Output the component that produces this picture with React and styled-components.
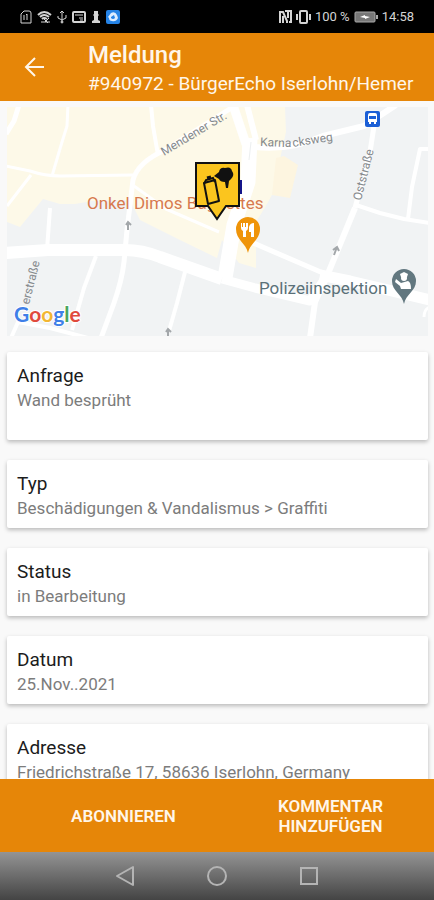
import React from "react";
import styled, { createGlobalStyle } from "styled-components";

const GlobalStyle = createGlobalStyle`
  * {
    box-sizing: border-box;
  }

  body {
    margin: 0;
    font-family: Roboto, "Liberation Sans", sans-serif;
    background: #f9f9f9;
  }
`;

const Screen = styled.div`
  display: flex;
  flex-direction: column;
  height: 100vh;
`;

const StatusBar = styled.div`
  display: flex;
  justify-content: space-between;
  align-items: center;
  flex: none;
  height: 33px;
  padding: 0 20px;
  background: #000;
  color: #d4d4d4;
  font-size: 13px;
`;

const StatusGroup = styled.div`
  display: flex;
  align-items: center;
  gap: ${(props) => props.$gap}px;

  svg {
    display: block;
  }
`;

const AppBar = styled.header`
  display: flex;
  align-items: center;
  flex: none;
  height: 68px;
  padding: 4px 16px 0 20px;
  gap: 38px;
  background: #e68608;
  color: #fff6ea;
`;

const BackButton = styled.button`
  display: flex;
  padding: 0 0 4px;
  border: none;
  background: none;
  color: inherit;
  cursor: pointer;
`;

const Heading = styled.div`
  white-space: nowrap;
`;

const Title = styled.h1`
  margin: 0;
  font-size: 24px;
  line-height: 30px;
  font-weight: 500;
`;

const Subtitle = styled.p`
  margin: 0;
  font-size: 19px;
  line-height: 28px;
`;

const Content = styled.main`
  display: flex;
  flex-direction: column;
  flex: 1;
  min-height: 0;
  padding: 6px 6px 0 7px;
  overflow-y: auto;
  scrollbar-width: none;
`;

const MapView = styled.svg`
  display: block;
  flex: none;
  width: 100%;
  height: 229px;
  background: #f1f3f4;
  font-family: Roboto, "Liberation Sans", sans-serif;
`;

const Cards = styled.div`
  display: flex;
  flex-direction: column;
  gap: 20px;
  padding: 16px 0;
`;

const Card = styled.section`
  flex: none;
  min-height: ${(props) => (props.$tall ? 88 : 68)}px;
  padding: 11px 10px 8px;
  background: #fff;
  border-radius: 2px;
  box-shadow: 0 2px 4px rgba(0, 0, 0, 0.26);
`;

const CardTitle = styled.h2`
  margin: 0;
  color: #1c1c1c;
  font-size: 19px;
  line-height: 25px;
  font-weight: 400;
`;

const CardText = styled.p`
  margin: 0;
  color: #7c7c7c;
  font-size: 17px;
  line-height: 24px;
`;

const ActionBar = styled.footer`
  display: grid;
  grid-template-columns: 1fr 1fr;
  flex: none;
  height: 73px;
  padding-left: 20px;
  background: #e68608;
`;

const ActionButton = styled.button`
  padding: 0 48px;
  border: none;
  background: none;
  color: #fff6ea;
  font-family: inherit;
  font-size: 17px;
  line-height: 20px;
  font-weight: 600;
  text-transform: uppercase;
  cursor: pointer;
`;

const NavBar = styled.nav`
  display: flex;
  justify-content: center;
  align-items: center;
  flex: none;
  gap: 68px;
  height: 48px;
  background: linear-gradient(#949494, #444);
`;

const NavButton = styled.button`
  display: flex;
  padding: 0;
  border: none;
  background: none;
  color: #b4b4b4;
  cursor: pointer;
`;

const details = [
  { title: "Anfrage", text: "Wand besprüht", tall: true },
  { title: "Typ", text: "Beschädigungen & Vandalismus > Graffiti" },
  { title: "Status", text: "in Bearbeitung" },
  { title: "Datum", text: "25.Nov..2021" },
  { title: "Adresse", text: "Friedrichstraße 17, 58636 Iserlohn, Germany" },
];

const roads = [
  { w: 5, d: "M19 105 L14 121 L6 134" },
  { w: 3, d: "M68 105 L67 126 L62 142 L52 176" },
  { w: 3, d: "M6 166 L30 171 Q45 176 60 176 L133 175" },
  { w: 3, d: "M31 175 L7 206" },
  { w: 4, d: "M151 105 L153 126 L158 155" },
  { w: 5, d: "M236 105 L165 150 Q138 162 133 180 L127 230 L124 262 Q122 280 114 303 L101 338" },
  { w: 3, d: "M134 186 L166 209 L219 232" },
  { w: 4, d: "M50 208 L47 250" },
  { w: 12, d: "M5 253 L48 250 L125 250 Q142 250 160 257 L222 279" },
  { w: 9, d: "M222 279 L255 288 L310 301 L324 280" },
  { w: 11, d: "M320 275 L350 281 L430 300" },
  { w: 9, d: "M233 105 L246 144" },
  { w: 6, d: "M247 105 L256 140" },
  { w: 15, d: "M250 138 L248 182 L234 225 L225 278" },
  { w: 5, d: "M230 233 L330 276" },
  { w: 6, d: "M254 147 Q290 151 323 136 L364 126 L396 105" },
  { w: 5, d: "M374 126 L370 152 L355 208" },
  { w: 6, d: "M355 208 L327 276 L315 302 L310 338" },
  { w: 4, d: "M356 205 L380 213 L404 219 L430 223" },
  { w: 4, d: "M408 219 L412 187 L420 149 L430 149" },
  { w: 4, d: "M96 256 L84 288 L72 330" },
  { w: 4, d: "M185 272 L177 303 L169 331" },
  { w: 4, d: "M11 338 L18 322 L50 328 L88 338" },
  { w: 3, d: "M424 317 Q424 309 430 307" },
];

const Map = () => {
  return (
    <MapView
      viewBox="7 107 421 229"
      preserveAspectRatio="xMidYMid slice"
      role="img"
      aria-label="Karte"
    >
      <path
        d="M7 107 H285 L286 132 L272 195 L256 225 L256 268 L239 263 L222 240 L217 258 L180 240 L140 220 L130 200 L92 201 L75 204 L60 204 L43 199 L20 227 L7 222 Z"
        fill="#fdf9e8"
      />
      <path d="M284 156 L298 165 L290 198 L272 195 L276 158 Z" fill="#fdf5e0" />
      <path d="M256 222 L272 196 L290 199 L280 251 L257 242 Z" fill="#f1f3f4" />

      <g fill="none" stroke="#fff" strokeLinejoin="round">
        {roads.map((road) => (
          <path key={road.d} d={road.d} strokeWidth={road.w} />
        ))}
      </g>
      <path d="M251 142 L249 160" stroke="#eceff0" fill="none" />

      <g fill="none" stroke="#a3a7aa" strokeWidth="2">
        <path d="M128 230 V222 M126 225 L128 222 L131 225" />
        <path d="M334 255 L337 247 M333 250 L337 247 L339 251" />
        <path d="M168 336 V329 M166 332 L168 329 L171 332" />
      </g>

      <g fill="#85898c" fontSize="12">
        <text transform="translate(164 156) rotate(-31)">Mendener Str.</text>
        <text transform="translate(260 146) rotate(2)">Karna</text>
        <text transform="translate(293 147) rotate(-9)">cksweg</text>
        <text transform="translate(361 201) rotate(-76)">Oststraße</text>
        <text transform="translate(29 305) rotate(-76)">erstraße</text>
      </g>

      <text x="87" y="209" fontSize="17" fill="#d7794e">
        Onkel Dimos Baguettes
      </text>
      <text x="259" y="294" fontSize="17" fill="#5a7078">
        Polizeiinspektion
      </text>

      {/* bus stop */}
      <rect x="365" y="111" width="15" height="16" rx="2" fill="#1b5fd6" />
      <path d="M368 115 Q368 113 370 113 H375 Q377 113 377 115 V122 H376 V124 H374 V122 H371 V124 H369 V122 H368 Z" fill="#fff" />
      <path d="M369 116 H376 V119 H369 Z" fill="#1b5fd6" />

      {/* restaurant */}
      <path d="M248 253 C246 243 236 240 236 229 A12 12 0 0 1 260 229 C260 240 250 243 248 253 Z" fill="#ef9409" />
      <path d="M241 223 H242 V227 H243 V223 H245 V227 H246 V223 H248 V228 Q248 230 246 231 V237 H243 V231 Q241 230 241 228 Z" fill="#fff" />
      <path d="M254 223 V237 H251 V232 H249 V227 Q250 223 254 223 Z" fill="#fff" />

      {/* police */}
      <path d="M404 304 C402 294 392 291 392 281 A12 12 0 0 1 416 281 C416 291 406 294 404 304 Z" fill="#62777f" />
      <g fill="#fff">
        <path d="M400 274 L404 272 L408 274 L407 277 H401 Z" />
        <circle cx="404" cy="278" r="3" />
        <path d="M396 279 L401 283 L408 281 Q411 282 411 289 H401 L400 286 L395 282 Z" />
      </g>

      {/* report marker */}
      <path d="M239 180 H242 V194 H239 Z" fill="#15158a" />
      <path
        d="M196 163 H239 V206 H226 L217 219 L208 206 H196 Z"
        fill="#fbc51e"
        stroke="#111"
        strokeWidth="2"
      />
      <path d="M204 183 L215 180 L219 201 L208 204 Z" fill="none" stroke="#111" strokeWidth="2" strokeLinejoin="round" />
      <path d="M204 184 L206 180 L213 178 L215 182" fill="none" stroke="#111" strokeWidth="2" />
      <path d="M207 178 L211 177" stroke="#111" strokeWidth="3" />
      <path d="M214 176 L219 172 Q220 167 225 168 Q231 166 232 171 Q235 175 231 179 L229 181 L228 188 L226 188 L225 182 Q220 182 219 179 Z" fill="#111" />

      <text x="14" y="322" fontSize="21" fontWeight="700" fontFamily="Lato, sans-serif" stroke="#fff" strokeWidth="2" paintOrder="stroke">
        <tspan fill="#3f7fe8">G</tspan>
        <tspan fill="#e04a3c">o</tspan>
        <tspan fill="#f2b632">o</tspan>
        <tspan fill="#3f7fe8">g</tspan>
        <tspan fill="#4aa65c">l</tspan>
        <tspan fill="#e04a3c">e</tspan>
      </text>
    </MapView>
  );
};

const StatusIcons = () => {
  return (
    <StatusGroup $gap={5}>
      <svg width="12" height="14" fill="none" stroke="#d4d4d4">
        <path d="M1 4 L4 1 H9 Q11 1 11 3 V13 H1 Z M4 5 V10 M7 4 V10 M6 5 L7 4" />
      </svg>
      <svg width="15" height="14" fill="none" stroke="#d4d4d4">
        <path d="M1 5 Q7 -1 14 5 M3 7 Q7 3 12 7 M5 9 Q7 7 10 9" strokeWidth="2" />
        <path d="M7 9 L11 13 M12 8 L8 12 M4 12 H13" />
      </svg>
      <svg width="10" height="14" fill="none" stroke="#d4d4d4">
        <path d="M5 1 V13 M3 3 L5 1 L7 3 M1 6 V8 L5 10 L9 8 V5" />
        <circle cx="5" cy="12" r="1" />
      </svg>
      <svg width="14" height="14" fill="none" stroke="#d4d4d4">
        <rect x="1" y="2" width="12" height="10" rx="1" strokeWidth="2" />
        <path d="M3 5 H11 M7 8 H11 M8 10 H11" />
      </svg>
      <svg width="10" height="14" fill="#d4d4d4">
        <path d="M3 1 H7 V4 L8 5 L7 6 V10 L9 11 V13 H1 V11 L3 10 V6 L2 5 L3 4 Z" />
      </svg>
      <svg width="14" height="14">
        <rect width="14" height="14" rx="2" fill="#2583e6" />
        <path d="M2 7 L5 3 Q9 1 11 5 L12 8 Q10 12 6 11 Q3 11 3 8 Z" fill="#dcecff" />
        <path d="M5 7 L8 5 L9 8 Q7 10 5 8 Z" fill="#2583e6" />
      </svg>
    </StatusGroup>
  );
};

const SystemIcons = () => {
  return (
    <StatusGroup $gap={4}>
      <svg width="13" height="14" fill="none" stroke="#d4d4d4" strokeWidth="2">
        <path d="M1 13 V2 H4 L8 11 V13 M4 6 V13 M6 1 H12 V12 H10 M9 1 V8" />
      </svg>
      <svg width="15" height="14" fill="none" stroke="#d4d4d4">
        <rect x="4" y="1" width="7" height="12" rx="1" strokeWidth="2" />
        <path d="M1 4 V10 M14 4 V10" strokeWidth="2" />
      </svg>
      <span>100 %</span>
      <svg width="24" height="12">
        <rect x="1" y="1" width="20" height="10" rx="1" fill="#777" stroke="#aaa" />
        <path d="M22 4 H24 V8 H22 Z" fill="#aaa" />
        <path d="M6 6 L11 4 L11 5 L16 6 L11 8 L11 7 Z" fill="#fff" />
      </svg>
      <span>14:58</span>
    </StatusGroup>
  );
};

const App = () => {
  return (
    <>
      <GlobalStyle />
      <Screen>
        <StatusBar>
          <StatusIcons />
          <SystemIcons />
        </StatusBar>

        <AppBar>
          <BackButton aria-label="Zurück">
            <svg width="30" height="30" viewBox="0 0 30 30" fill="none" stroke="currentColor" strokeWidth="2">
              <path d="M24 15 H6 M15 6 L6 15 L15 24" />
            </svg>
          </BackButton>
          <Heading>
            <Title>Meldung</Title>
            <Subtitle>#940972 - BürgerEcho Iserlohn/Hemer</Subtitle>
          </Heading>
        </AppBar>

        <Content>
          <Map />
          <Cards>
            {details.map((item) => (
              <Card key={item.title} $tall={item.tall}>
                <CardTitle>{item.title}</CardTitle>
                <CardText>{item.text}</CardText>
              </Card>
            ))}
          </Cards>
        </Content>

        <ActionBar>
          <ActionButton>Abonnieren</ActionButton>
          <ActionButton>Kommentar hinzufügen</ActionButton>
        </ActionBar>

        <NavBar>
          <NavButton aria-label="Zurück">
            <svg width="24" height="24" fill="none" stroke="currentColor">
              <path d="M20 3 V21 L4 12 Z" strokeWidth="2" strokeLinejoin="round" />
            </svg>
          </NavButton>
          <NavButton aria-label="Startseite">
            <svg width="24" height="24" fill="none" stroke="currentColor">
              <circle cx="12" cy="12" r="9" strokeWidth="2" />
            </svg>
          </NavButton>
          <NavButton aria-label="Übersicht">
            <svg width="24" height="24" fill="none" stroke="currentColor">
              <rect x="4" y="4" width="16" height="16" strokeWidth="2" />
            </svg>
          </NavButton>
        </NavBar>
      </Screen>
    </>
  );
};

export default App;
